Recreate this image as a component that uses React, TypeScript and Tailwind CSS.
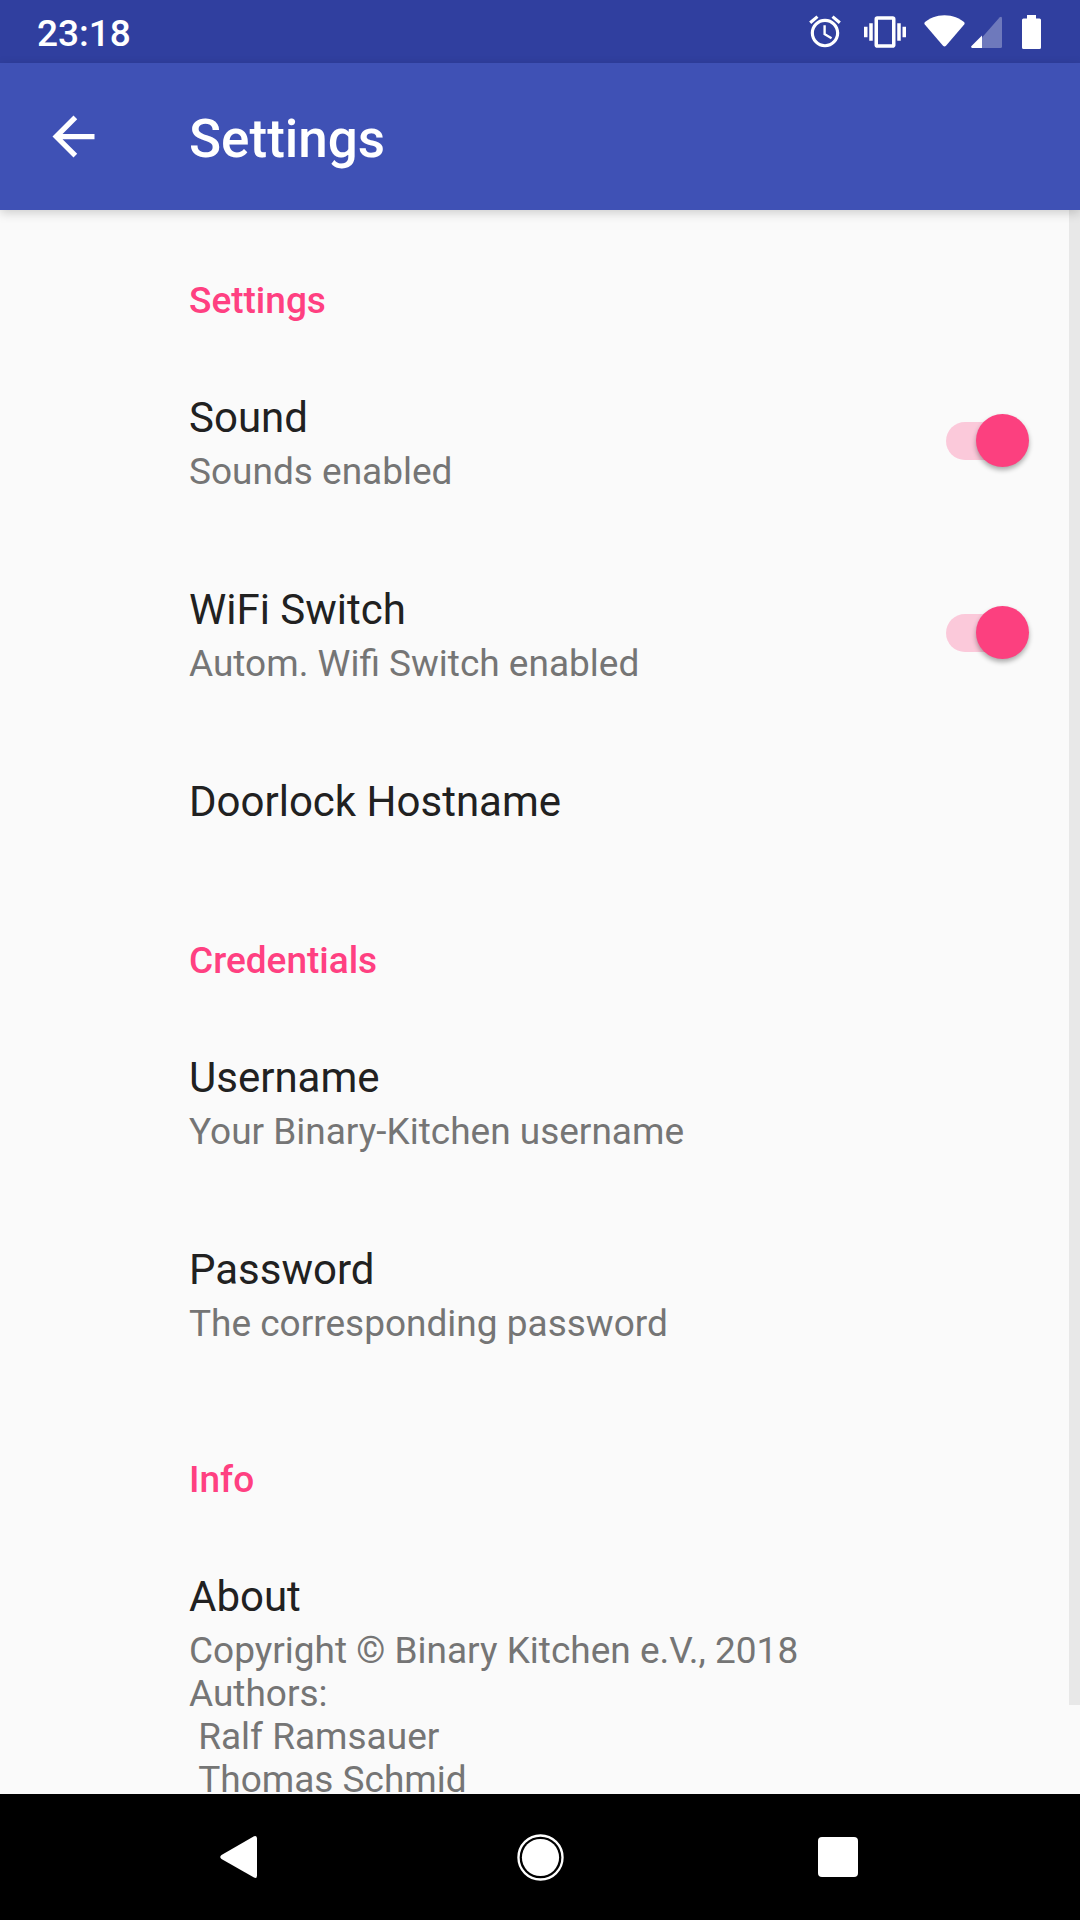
import { useState, type ReactNode } from "react";

function AlarmIcon() {
  return (
    <svg viewBox="0 0 24 24" className="h-[39px] w-[38px] fill-white" aria-hidden="true">
      <path d="M22 5.72l-4.6-3.86-1.29 1.53 4.6 3.86L22 5.72zM7.88 3.39L6.6 1.86 2 5.71l1.29 1.53 4.59-3.85zM12.5 8H11v6l4.75 2.85.75-1.23-4-2.37V8zM12 4c-4.97 0-9 4.03-9 9s4.02 9 9 9c4.97 0 9-4.03 9-9s-4.03-9-9-9zm0 16c-3.87 0-7-3.13-7-7s3.13-7 7-7 7 3.13 7 7-3.13 7-7 7z" />
    </svg>
  );
}

function VibrateIcon() {
  return (
    <svg viewBox="0 0 24 24" className="ml-[20px] size-[42px] fill-white" aria-hidden="true">
      <path d="M0 15h2V9H0v6zm3 2h2V7H3v10zm19-8v6h2V9h-2zm-3 8h2V7h-2v10zM16.5 3h-9C6.67 3 6 3.67 6 4.5v15c0 .83.67 1.5 1.5 1.5h9c.83 0 1.5-.67 1.5-1.5v-15c0-.83-.67-1.5-1.5-1.5zM16 19H8V5h8v14z" />
    </svg>
  );
}

function WifiIcon() {
  return (
    <svg viewBox="0 0 41 34" className="ml-[18px] h-[34px] w-[41px] fill-white" aria-hidden="true">
      <path d="M1 7C5.500 3.500 12 0.300 20.500 0.300S35.500 3.500 40 7Q41.200 8.200 40.200 9.400L22 30.800Q20.500 32.400 19 30.800L0.800 9.400Q-0.200 8.200 1 7Z" />
    </svg>
  );
}

function SignalIcon() {
  return (
    <svg viewBox="0 0 31 34" className="ml-[6px] h-[34px] w-[31px] fill-white" aria-hidden="true">
      <path opacity="0.3" d="M11 22.500L28.500 2.500Q31 0.500 31 3.500V31.500Q31 33 29.500 33H11Z" />
      <path d="M11 20.500V33H1.200Q-0.600 32.600 0.500 31Z" />
    </svg>
  );
}

function BatteryIcon() {
  return (
    <svg viewBox="0 0 19 34" className="ml-[20px] h-[34px] w-[19px] fill-white" aria-hidden="true">
      <path d="M5 0H14V3.500H17.500Q19 3.500 19 5V32.500Q19 34 17.500 34H1.500Q0 34 0 32.500V5Q0 3.500 1.500 3.500H5Z" />
    </svg>
  );
}

function StatusBar() {
  return (
    <div className="flex h-[63px] shrink-0 items-center justify-between bg-[#303f9f] pr-[39px] pl-[37px]">
      <time className="pt-[3px] text-[37px] leading-[43px] font-medium text-white">23:18</time>
      <div className="flex items-center">
        <AlarmIcon />
        <VibrateIcon />
        <WifiIcon />
        <SignalIcon />
        <BatteryIcon />
      </div>
    </div>
  );
}

function Toolbar() {
  return (
    <header className="relative z-10 flex h-[147px] shrink-0 items-center bg-[#3f51b5] pl-[42px] shadow-[0_3px_10px_rgba(0,0,0,0.18)]">
      <button type="button" aria-label="Navigate up" className="mr-[84px] size-[63px]">
        <svg viewBox="0 0 24 24" className="size-full fill-white" aria-hidden="true">
          <path d="M20 11H7.830l5.590-5.590L12 4l-8 8 8 8 1.410-1.410L7.830 13H20v-2z" />
        </svg>
      </button>
      <h1 className="pt-[4px] text-[53px] leading-[62px] font-medium text-white">Settings</h1>
    </header>
  );
}

function Category({ title, children }: { title: string; children: ReactNode }) {
  return (
    <section>
      <h2 className="pt-[69px] pb-[23px] pl-[189px] text-[37px] leading-[43px] font-medium text-[#ff4081]">
        {title}
      </h2>
      {children}
    </section>
  );
}

function Labels({ title, summary }: { title: string; summary?: string }) {
  return (
    <span className="flex min-w-0 flex-1 flex-col gap-2 pt-[48px] pb-[44px]">
      <span className="text-[42px] leading-[49px] text-[#212121]">{title}</span>
      {summary && (
        <span className="text-[37px] leading-[43px] whitespace-pre-wrap text-[#757575]">{summary}</span>
      )}
    </span>
  );
}

function Preference({ title, summary }: { title: string; summary?: string }) {
  return (
    <button type="button" className="flex w-full pr-[42px] pl-[189px] text-left">
      <Labels title={title} summary={summary} />
    </button>
  );
}

function SwitchPreference({ title, summary }: { title: string; summary: string }) {
  const [on, setOn] = useState(true);
  return (
    <label className="flex w-full cursor-pointer items-center pr-[54px] pl-[189px]">
      <Labels title={title} summary={summary} />
      <input
        type="checkbox"
        role="switch"
        checked={on}
        onChange={(e) => setOn(e.target.checked)}
        className="relative h-[38px] w-[80px] shrink-0 cursor-pointer appearance-none rounded-full bg-[#bdbdbd] before:absolute before:top-[-8px] before:left-[-3px] before:size-[53px] before:rounded-full before:bg-[#fafafa] before:shadow-[0_3px_5px_rgba(0,0,0,0.32)] checked:bg-[#fbc9da] checked:before:left-[30px] checked:before:bg-[#fc407f]"
      />
    </label>
  );
}

function NavigationBar() {
  return (
    <nav className="flex h-[126px] shrink-0 items-center justify-center bg-black">
      <button type="button" aria-label="Back" className="flex h-full w-[298px] items-center justify-center">
        <svg viewBox="0 0 44 44" className="size-[44px] fill-white" aria-hidden="true">
          <path d="M34 1.300Q37 0 37 3.500V40.500Q37 44 34 42.600L1.500 24Q-1 22 1.500 20Z" />
        </svg>
      </button>
      <button type="button" aria-label="Home" className="flex h-full w-[298px] items-center justify-center">
        <svg viewBox="0 0 48 48" className="size-[47px]" aria-hidden="true">
          <circle cx="24" cy="24" r="22.500" fill="none" stroke="#fff" strokeWidth="2.400" />
          <circle cx="24" cy="24" r="19" fill="#fff" />
        </svg>
      </button>
      <button type="button" aria-label="Overview" className="flex h-full w-[298px] items-center justify-center">
        <span className="size-[40px] rounded-[4px] bg-white" />
      </button>
    </nav>
  );
}

const ABOUT = "Copyright © Binary Kitchen e.V., 2018\nAuthors:\n Ralf Ramsauer\n Thomas Schmid";

export default function App() {
  return (
    <div className="flex h-screen flex-col bg-[#fafafa] font-[Roboto,sans-serif]">
      <StatusBar />
      <Toolbar />
      <div className="relative min-h-0 flex-1">
        <main className="h-full overflow-y-auto pb-[43px] [scrollbar-width:none]">
          <Category title="Settings">
            <SwitchPreference title="Sound" summary="Sounds enabled" />
            <SwitchPreference title="WiFi Switch" summary="Autom. Wifi Switch enabled" />
            <Preference title="Doorlock Hostname" />
          </Category>
          <Category title="Credentials">
            <Preference title="Username" summary="Your Binary-Kitchen username" />
            <Preference title="Password" summary="The corresponding password" />
          </Category>
          <Category title="Info">
            <Preference title="About" summary={ABOUT} />
          </Category>
        </main>
        <div className="absolute top-0 right-0 h-[94.4%] w-[11px] bg-[#e8e8e8]" />
      </div>
      <NavigationBar />
    </div>
  );
}
